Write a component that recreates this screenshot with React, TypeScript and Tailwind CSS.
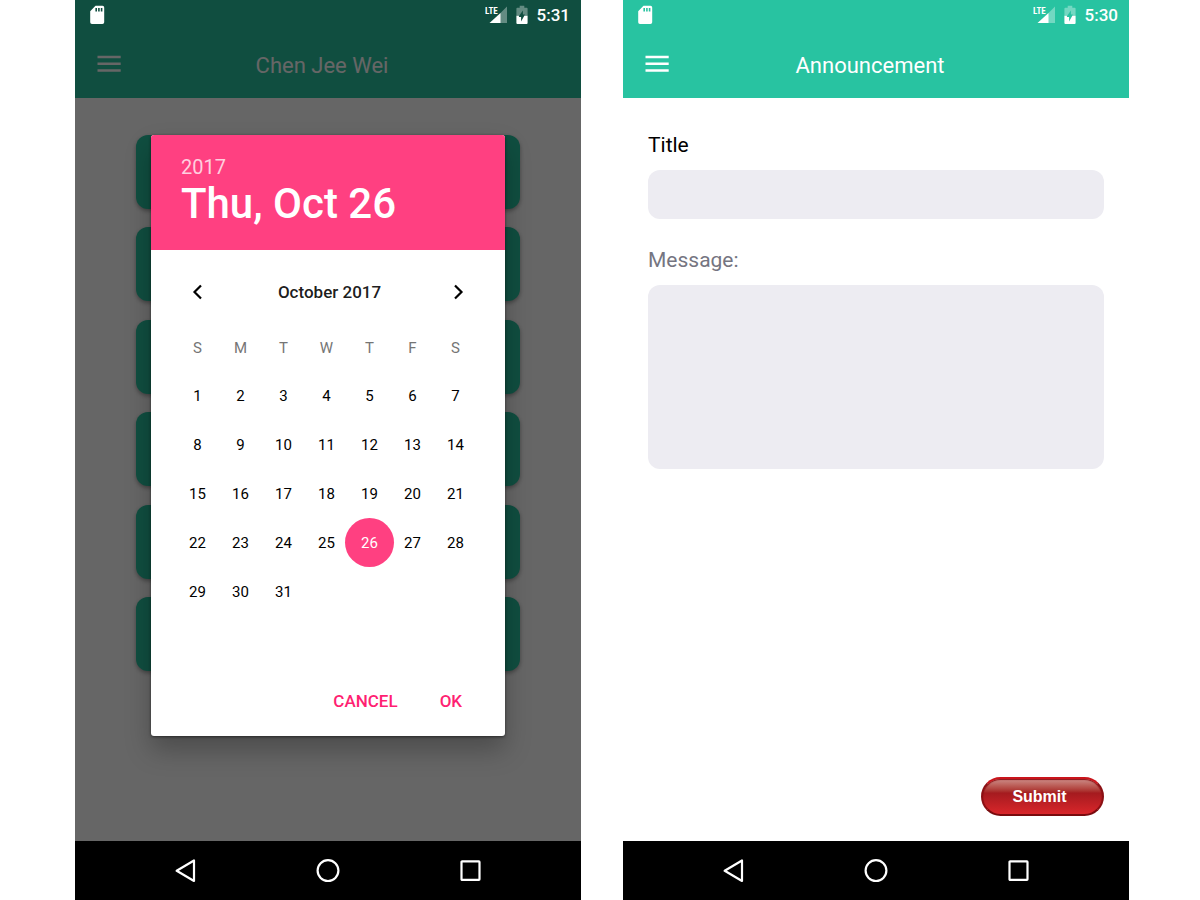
import type { ReactNode } from "react";

const WEEKDAYS = ["S", "M", "T", "W", "T", "F", "S"];
const SELECTED_DAY = 26;
const WEEKS = Array.from({ length: 6 }, (_, week) =>
  Array.from({ length: 7 }, (_, day) => {
    const date = week * 7 + day + 1;
    return date <= 31 ? date : null;
  }),
);

function SdCardIcon() {
  return (
    <svg width="16" height="20" viewBox="0 0 16 20" aria-hidden="true">
      <path
        fill="#fff"
        fillRule="evenodd"
        d="M6.500.8h7A1.800 1.800 0 0 1 15.200 2.600V17.200A1.800 1.800 0 0 1 13.400 19H3A1.800 1.800 0 0 1 1.200 17.200V6.200zM6.400 3v3.400H8V3zM9.100 3v3.400h1.600V3zM11.800 3v3.400h1.600V3z"
      />
    </svg>
  );
}

function SignalIcon() {
  return (
    <svg width="23" height="20" viewBox="0 0 23 20" aria-hidden="true">
      <path fill="#fff" fillOpacity="0.35" d="M22 1.500V18h-7V8.500z" />
      <path fill="#fff" d="M4.500 18 15.500 8V18z" />
      <text
        x="0"
        y="8.500"
        fill="#fff"
        fontSize="9"
        fontWeight="700"
        fontFamily="'Roboto Condensed', 'Liberation Sans Narrow', 'Liberation Sans', sans-serif"
      >
        LTE
      </text>
    </svg>
  );
}

function BatteryIcon() {
  return (
    <svg width="12" height="20" viewBox="0 0 12 20" aria-hidden="true">
      <path
        fill="#fff"
        fillOpacity="0.35"
        d="M3.700.8h4.600v2h2.400a.9.9 0 0 1 .9.900v7.100H8.300L9 9.600H6.900V5.500L3.200 10.800H.4V3.700a.9.9 0 0 1 .9-.9h2.400z"
      />
      <path
        fill="#fff"
        fillRule="evenodd"
        d="M.4 10.800h2.800L2.800 11.900h2.300v4.500l3.200-5.600h3.300V18a1 1 0 0 1-1 1H1.400a1 1 0 0 1-1-1z"
      />
    </svg>
  );
}

function StatusBar({ time }: { time: string }) {
  return (
    <div className="absolute inset-x-0 top-0 z-20 flex h-[30px] items-center justify-between pr-[11px] pl-[14px] text-white">
      <SdCardIcon />
      <div className="flex items-center">
        <SignalIcon />
        <span className="ml-2">
          <BatteryIcon />
        </span>
        <time className="ml-[9px] text-[17px] leading-5 font-medium">{time}</time>
      </div>
    </div>
  );
}

function AppHeader({ title }: { title: string }) {
  return (
    <header className="bg-[#28c3a1] pt-[30px]">
      <div className="grid h-[68px] grid-cols-[24px_1fr_24px] items-center px-[22px]">
        <button type="button" aria-label="Open menu" className="flex h-6 items-center">
          <svg width="24" height="18" viewBox="0 0 24 18" aria-hidden="true">
            <path d="M.5 2h23.200M.5 8.700h23.200M.5 15.500h23.200" stroke="#fff" strokeWidth="2.400" />
          </svg>
        </button>
        <h1 className="pt-[3px] pr-3 text-center text-[22px] leading-7 text-white">{title}</h1>
      </div>
    </header>
  );
}

function NavigationBar() {
  return (
    <nav className="flex h-[59px] items-center justify-around bg-black px-[39px]">
      <button type="button" aria-label="Back">
        <svg width="24" height="24" viewBox="0 0 24 24" fill="none" aria-hidden="true">
          <path d="M21 1.500v20.500L3.700 11.800z" stroke="#fff" strokeWidth="2.200" strokeLinejoin="round" />
        </svg>
      </button>
      <button type="button" aria-label="Home">
        <svg width="24" height="24" viewBox="0 0 24 24" fill="none" aria-hidden="true">
          <circle cx="12" cy="11.600" r="10.400" stroke="#fff" strokeWidth="2.200" />
        </svg>
      </button>
      <button type="button" aria-label="Recent apps">
        <svg width="24" height="24" viewBox="0 0 24 24" fill="none" aria-hidden="true">
          <rect x="2.500" y="2.300" width="18" height="18.500" rx=".6" stroke="#fff" strokeWidth="2.200" />
        </svg>
      </button>
    </nav>
  );
}

function Phone({ time, children }: { time: string; children: ReactNode }) {
  return (
    <section className="flex min-h-screen flex-col">
      <div className="relative flex grow flex-col">
        <StatusBar time={time} />
        {children}
      </div>
      <NavigationBar />
    </section>
  );
}

function Chevron({ d }: { d: string }) {
  return (
    <svg width="12" height="16" viewBox="0 0 12 16" fill="none" aria-hidden="true">
      <path d={d} stroke="#000" strokeWidth="2.200" />
    </svg>
  );
}

function DatePicker() {
  return (
    <div
      role="dialog"
      aria-label="Choose a date"
      className="w-[70%] overflow-hidden rounded-[3px] bg-white shadow-[0_14px_26px_rgba(0,0,0,0.26),0_1px_3px_rgba(0,0,0,0.5)]"
    >
      <div className="h-[115px] bg-[#ff4081] pt-5 pl-[30px] text-white">
        <p className="text-[20px] leading-6 text-white/75">2017</p>
        <p className="text-[42px] leading-[50px] font-medium">Thu, Oct 26</p>
      </div>
      <div className="pr-7 pl-[25px]">
        <div className="flex h-[75px] items-center justify-between pt-2">
          <button type="button" aria-label="Previous month" className="flex w-[42px] justify-center">
            <Chevron d="M10 1.500 3.500 8l6.500 6.500" />
          </button>
          <h2 className="text-[17px] leading-6 font-medium text-black/90">October 2017</h2>
          <button type="button" aria-label="Next month" className="flex w-9 justify-center">
            <Chevron d="M2 1.500 8.500 8 2 14.500" />
          </button>
        </div>
        <table className="w-full table-fixed border-collapse text-center text-[15px] leading-5">
          <thead>
            <tr className="h-[46px]">
              {WEEKDAYS.map((name, index) => (
                <th key={index} className="p-0 font-normal text-[#757575]">
                  {name}
                </th>
              ))}
            </tr>
          </thead>
          <tbody>
            {WEEKS.map((week, index) => (
              <tr key={index} className="h-[49px]">
                {week.map((date, day) => (
                  <td key={day} className="p-0">
                    {date !== null && (
                      <button
                        type="button"
                        className={
                          date === SELECTED_DAY
                            ? "-mx-[3px] block size-[49px] rounded-full bg-[#ff4081] text-white"
                            : "block h-[49px] w-full text-black"
                        }
                      >
                        {date}
                      </button>
                    )}
                  </td>
                ))}
              </tr>
            ))}
          </tbody>
        </table>
      </div>
      <div className="flex h-[71px] items-center justify-end gap-[42px] pr-[43px] text-[17px] leading-6 font-medium text-[#ff1f72]">
        <button type="button">CANCEL</button>
        <button type="button">OK</button>
      </div>
    </div>
  );
}

function CalendarScreen() {
  return (
    <Phone time="5:31">
      <AppHeader title="Chen Jee Wei" />
      <main className="grow bg-white pt-[37px]">
        <div className="mx-auto flex h-[536px] w-[76%] flex-col justify-between">
          {Array.from({ length: 6 }, (_, index) => (
            <div
              key={index}
              className="h-[74px] rounded-xl bg-[#28c3a1] shadow-[0_2px_4px_rgba(0,0,0,0.35)]"
            />
          ))}
        </div>
      </main>
      <div className="absolute inset-0 z-10 flex items-center justify-center bg-black/60 pt-[30px]">
        <DatePicker />
      </div>
    </Phone>
  );
}

function AnnouncementScreen() {
  return (
    <Phone time="5:30">
      <AppHeader title="Announcement" />
      <main className="flex grow flex-col bg-white">
        <form
          className="flex grow flex-col px-[25px] pt-[33px] pb-[25px]"
          onSubmit={(event) => event.preventDefault()}
        >
          <label htmlFor="title" className="text-[21px] leading-7 text-black">
            Title
          </label>
          <input
            id="title"
            type="text"
            className="mt-[11px] h-[49px] rounded-xl bg-[#edecf2] px-4 text-lg outline-none"
          />
          <label htmlFor="message" className="mt-[27px] text-[21px] leading-7 text-[#757581]">
            Message:
          </label>
          <textarea
            id="message"
            className="mt-[11px] h-[184px] resize-none rounded-xl bg-[#edecf2] p-4 text-lg outline-none"
          />
          <button
            type="submit"
            className="mt-auto h-[39px] w-[123px] self-end rounded-full border-2 border-t-[#c9141b] border-r-[#8b1014] border-b-[#790b0e] border-l-[#8b1014] bg-linear-to-b from-[#cb8c88] via-[#a51b1f] via-40% to-[#d9262b] pr-[6px] font-['Liberation_Sans',sans-serif] text-[16px] leading-5 font-bold text-white shadow-[inset_0_1px_1px_#8b1014]"
          >
            Submit
          </button>
        </form>
      </main>
    </Phone>
  );
}

export default function App() {
  return (
    <div className="grid min-h-screen grid-cols-2 gap-[42px] bg-white pr-[71px] pl-[75px] font-[Roboto,sans-serif]">
      <CalendarScreen />
      <AnnouncementScreen />
    </div>
  );
}
